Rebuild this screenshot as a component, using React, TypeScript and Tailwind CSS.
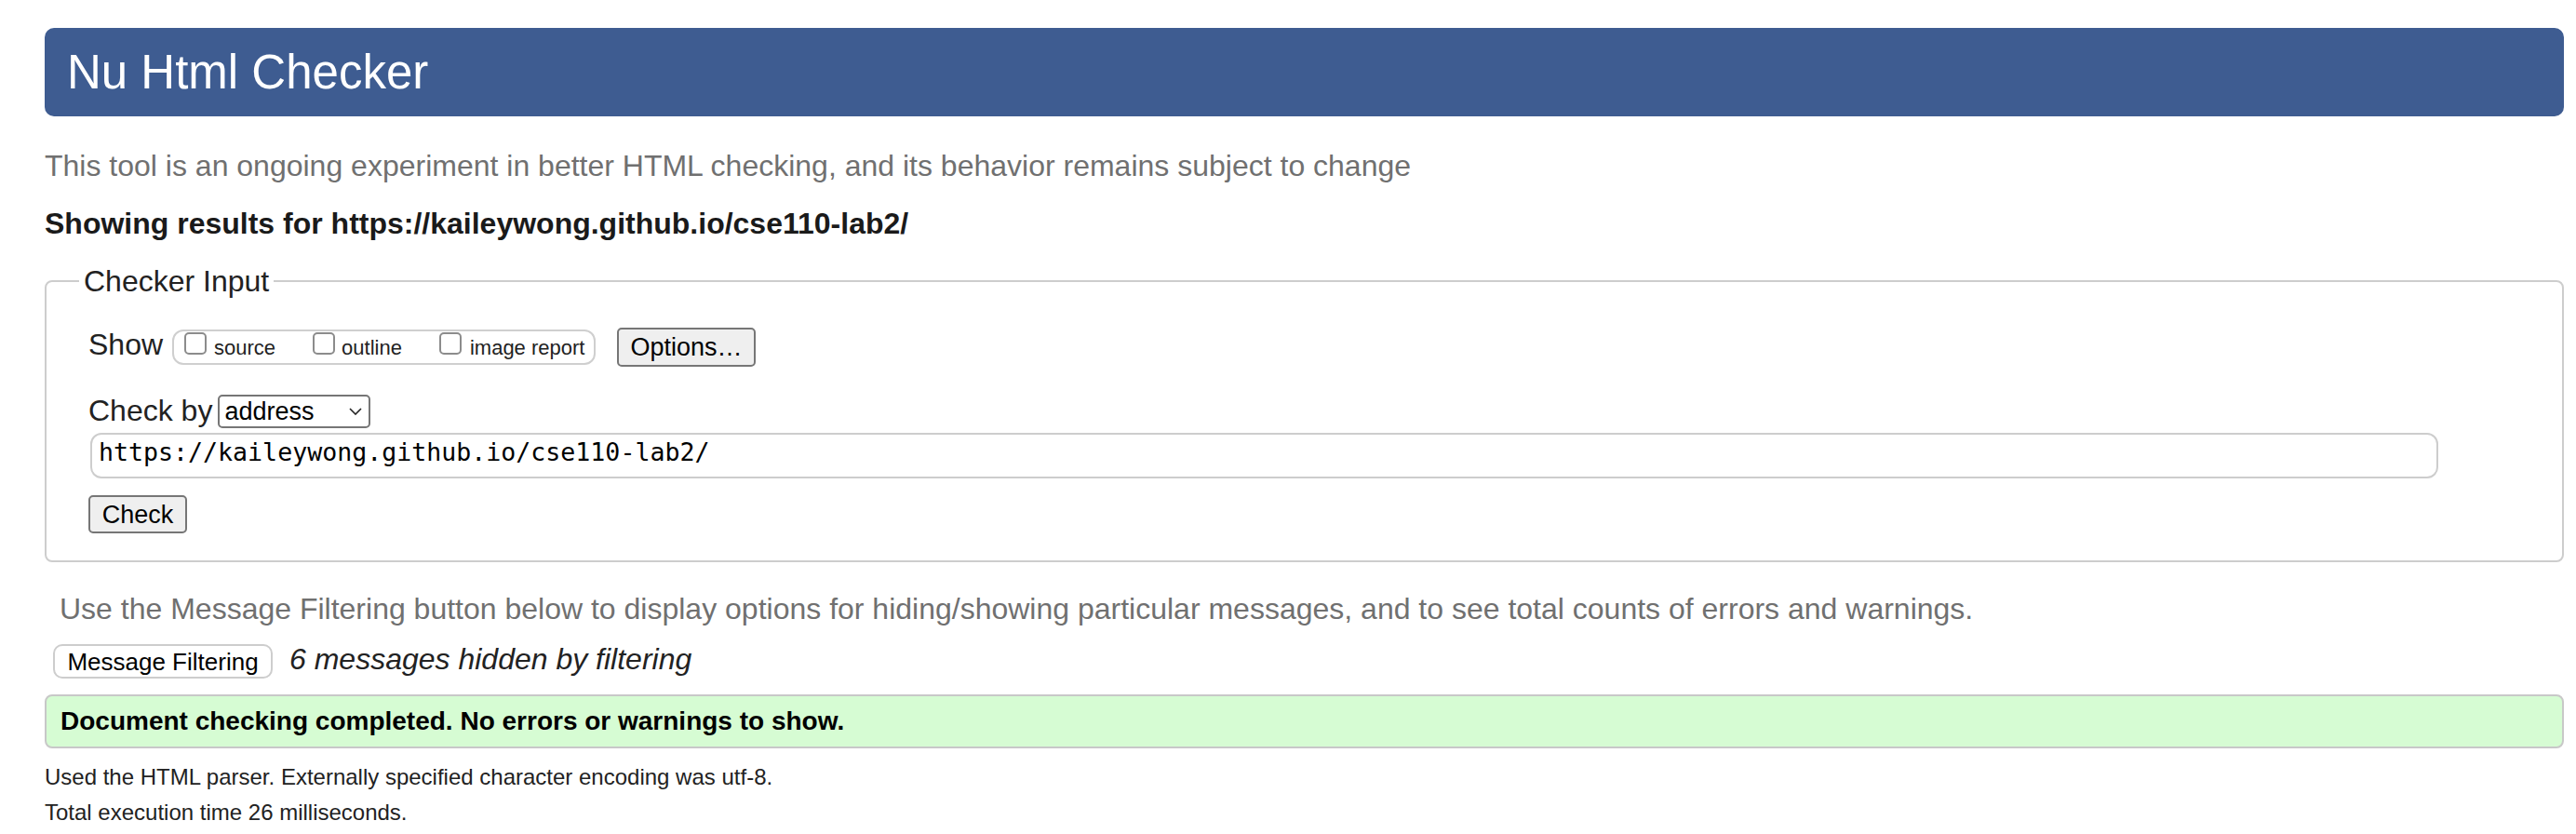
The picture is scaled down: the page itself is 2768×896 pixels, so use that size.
import React from 'react';

const sans = "font-['Liberation_Sans',Arial,sans-serif]";

const Checkbox = () => (
  <span className="block w-[24px] h-[24px] mt-[1px] rounded-[5px] border-[2px] border-[#8c8c8c] bg-white" />
);

const App = () => {
  return (
    <div className={`w-[2768px] h-[896px] overflow-hidden bg-white pl-[48px] pr-[13px] text-[#222] ${sans}`}>
      {/* header */}
      <div className="mt-[30px] h-[95px] rounded-[10px] bg-[#3e5c91] pl-[24px]">
        <h1 className="text-[51px] leading-[95px] text-white">Nu Html Checker</h1>
      </div>

      <p className="mt-[35px] text-[32px] leading-[36px] text-[#707070]">
        This tool is an ongoing experiment in better HTML checking, and its behavior remains subject to change
      </p>
      <p className="mt-[26px] text-[32px] leading-[36px] font-bold text-[#1a1a1a]">
        Showing results for https://kaileywong.github.io/cse110-lab2/
      </p>

      {/* checker input */}
      <fieldset className="mt-[26px] border-[2px] border-[#cdcdcd] rounded-[8px] pl-[35px] pr-0 pt-[32px] pb-[29px]">
        <legend className="px-[5px] text-[32px] leading-[36px] text-[#222]">Checker Input</legend>

        <div className="pl-[10px]">
          <div className="flex items-start">
            <span className="text-[32px] leading-[36px]">Show</span>
            <div className="ml-[10px] mt-[2px] w-[455px] h-[38px] flex items-start rounded-[12px] border-[2px] border-[#cfcfcf] pl-[11px]">
              <Checkbox />
              <span className="ml-[8px] mt-[5px] text-[22px] leading-[26px]">source</span>
              <span className="ml-[40px]"><Checkbox /></span>
              <span className="ml-[7px] mt-[5px] text-[22px] leading-[26px]">outline</span>
              <span className="ml-[40px]"><Checkbox /></span>
              <span className="ml-[9px] mt-[5px] text-[22px] leading-[26px]">image report</span>
            </div>
            <button className="ml-[23px] w-[149px] h-[42px] rounded-[5px] border-[2px] border-[#767676] bg-[#efefef] text-[27px] leading-[30px] text-black">
              Options…
            </button>
          </div>

          <div className="mt-[29px] flex items-start">
            <span className="text-[32px] leading-[36px]">Check by</span>
            <div className="ml-[6px] mt-[1px] w-[164px] h-[36px] flex items-center justify-between rounded-[5px] border-[2px] border-[#767676] pl-[5px] pr-[7px]">
              <span className="text-[27px] leading-[30px] text-black">address</span>
              <svg width="14" height="8" viewBox="0 0 14 8" fill="none">
                <path d="M1 1 L7 7 L13 1" stroke="#222" strokeWidth="1.6" />
              </svg>
            </div>
          </div>

          <div className="mt-[5px] ml-[2px] w-[2523px] h-[49px] rounded-[12px] border-[2px] border-[#cdcdcd] pl-[7px] font-['DejaVu_Sans_Mono',monospace] text-[26.6px] leading-[38px] text-black">
            https://kaileywong.github.io/cse110-lab2/
          </div>

          <button className="mt-[18px] w-[106px] h-[41px] rounded-[5px] border-[2px] border-[#767676] bg-[#efefef] text-[27px] leading-[30px] text-black">
            Check
          </button>
        </div>
      </fieldset>

      <p className="mt-[32px] ml-[16px] text-[32px] leading-[36px] text-[#707070]">
        Use the Message Filtering button below to display options for hiding/showing particular messages, and to see total counts of errors and warnings.
      </p>

      <div className="mt-[18px] flex items-start">
        <button className="ml-[9px] mt-[2px] w-[236px] h-[37px] rounded-[10px] border-[2px] border-[#cdcdcd] bg-white text-[26px] leading-[30px] text-black">
          Message Filtering
        </button>
        <span className="ml-[18px] text-[32px] leading-[36px] italic text-[#222]">6 messages hidden by filtering</span>
      </div>

      <div className="mt-[17px] h-[58px] rounded-[8px] border-[2px] border-[#c8c8c8] bg-[#d6fcd3] pl-[15px] pt-[10px]">
        <p className="text-[28px] leading-[34px] font-bold text-black">
          Document checking completed. No errors or warnings to show.
        </p>
      </div>

      <p className="mt-[12px] text-[24px] leading-[38px] text-[#222]">
        Used the HTML parser. Externally specified character encoding was utf-8.
      </p>
      <p className="text-[24px] leading-[38px] text-[#222]">Total execution time 26 milliseconds.</p>
    </div>
  );
};

export default App;
